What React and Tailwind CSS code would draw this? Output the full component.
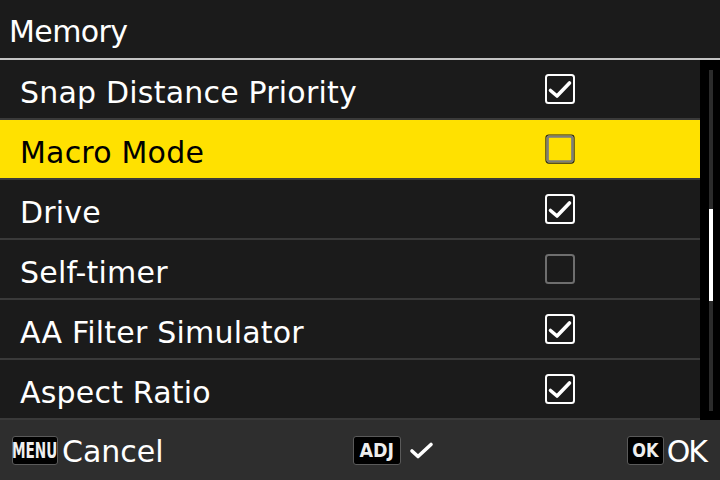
import React from 'react';

const items = [
  { label: 'Snap Distance Priority', checked: true },
  { label: 'Macro Mode', checked: false, active: true },
  { label: 'Drive', checked: true },
  { label: 'Self-timer', checked: false },
  { label: 'AA Filter Simulator', checked: true },
  { label: 'Aspect Ratio', checked: true },
];

const Box = ({ checked, active }) => {
  if (checked) {
    return (
      <svg width="30" height="30" viewBox="0 0 30 30">
        <rect x="1" y="1" width="28" height="28" rx="2.5" fill="none" stroke="#fff" strokeWidth="2" />
        <path d="M5.5 16.5 L12 22 L24.5 9" fill="none" stroke="#fff" strokeWidth="3.6" strokeLinecap="round" strokeLinejoin="round" />
      </svg>
    );
  }
  if (active) {
    return (
      <svg width="32" height="32" viewBox="0 0 32 32">
        <rect x="1" y="1" width="30" height="30" rx="3" fill="none" stroke="#222" strokeWidth="1.2" />
        <rect x="2.8" y="2.8" width="26.4" height="26.4" rx="2" fill="none" stroke="#7d7d7d" strokeWidth="2.6" />
      </svg>
    );
  }
  return (
    <svg width="30" height="30" viewBox="0 0 30 30">
      <rect x="1" y="1" width="28" height="28" rx="2.5" fill="none" stroke="#6e6e6e" strokeWidth="2" />
    </svg>
  );
};

const Badge = ({ children, className }) => (
  <div className={`h-[29px] bg-black border border-[#5a5a5a] rounded-[3px] flex items-center justify-center ${className}`}>
    {children}
  </div>
);

const font = { fontFamily: '"DejaVu Sans", sans-serif' };

export default function App() {
  return (
    <div className="w-[720px] h-[480px] bg-[#1b1b1b] flex flex-col overflow-hidden text-white" style={font}>
      {/* Title */}
      <div className="h-[60px] shrink-0 border-b-2 border-[#c4c4c4] flex items-center pl-[9px] pt-[6px] text-[30px] leading-none tracking-[-0.6px]">
        Memory
      </div>

      <div className="flex h-[360px] shrink-0">
        {/* List */}
        <div className="flex-1 flex flex-col">
          {items.map((it) => (
            <div
              key={it.label}
              className={`h-[60px] shrink-0 border-b-2 border-[#3a3a3a] flex items-center ${it.active ? 'bg-[#ffe100] text-black' : ''}`}
            >
              <div className="w-[545px] pl-[20px] text-[30px] leading-none pt-[7px] tracking-[0.2px]">{it.label}</div>
              <div className="w-[30px] h-[30px] flex items-center justify-center">
                <Box checked={it.checked} active={it.active} />
              </div>
            </div>
          ))}
        </div>
        {/* Scrollbar */}
        <div className="w-[20px] bg-black flex justify-center pt-[10px] pb-[9px]">
          <div className="w-[4px] h-full bg-[#2b2b2b] flex flex-col ml-[1px]">
            <div className="h-[139px] shrink-0" />
            <div className="h-[92px] shrink-0 bg-white" />
          </div>
        </div>
      </div>

      {/* Footer */}
      <div className="flex-1 bg-[#2e2e2e] flex items-center px-[12px] pt-[1px]">
        <div className="flex items-center w-[341px]">
          <Badge className="w-[46px]">
            <span className="font-bold text-[22px] leading-none inline-block scale-x-[0.62] text-[#eee]">MENU</span>
          </Badge>
          <span className="text-[30px] leading-none ml-[4px] pt-[3px]">Cancel</span>
        </div>
        <div className="flex items-center">
          <Badge className="w-[48px]">
            <span className="font-bold text-[19px] leading-none inline-block scale-x-[0.92] text-[#eee]">ADJ</span>
          </Badge>
          <svg width="26" height="20" viewBox="0 0 26 20" className="ml-[8px]">
            <path d="M3 10 L9 15.5 L22 3.5" fill="none" stroke="#fff" strokeWidth="3.6" strokeLinecap="round" strokeLinejoin="round" />
          </svg>
        </div>
        <div className="flex items-center ml-auto">
          <Badge className="w-[37px]">
            <span className="font-bold text-[19px] leading-none inline-block scale-x-[0.85] text-[#eee]">OK</span>
          </Badge>
          <span className="text-[30px] leading-none ml-[3px] pt-[3px] tracking-[-2px] pr-[2px]">OK</span>
        </div>
      </div>
    </div>
  );
}
